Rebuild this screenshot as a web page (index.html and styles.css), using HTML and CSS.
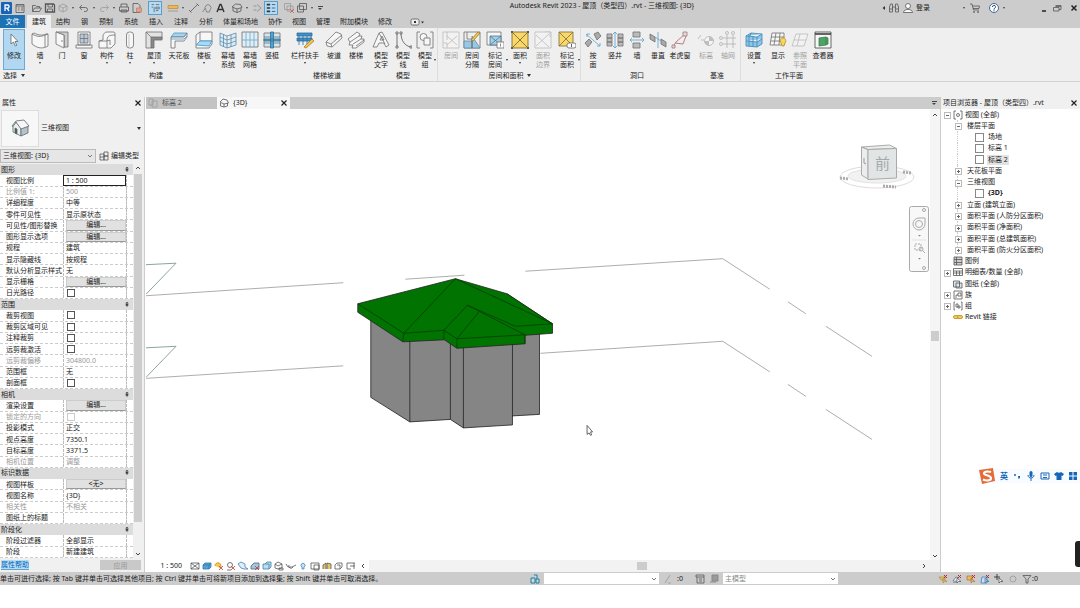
FILE: index.html
```html
<!DOCTYPE html>
<html lang="zh-CN">
<head>
<meta charset="utf-8">
<title>Autodesk Revit 2023</title>
<link rel="stylesheet" href="styles.css">
</head>
<body>
<header class="titlebar">
  <div class="quick">
    <button class="q" aria-label="Revit"><svg viewBox="0 0 12 12"><rect width="11" height="12" rx="1" fill="#1763b6"/><path d="M4 9V3h2.500a1.500 1.500 0 0 1 0 3.200H4M6 6.200L8 9" fill="none" stroke="#fff" stroke-width="1.300"/></svg></button>
    <button class="q" aria-label="主页"><svg viewBox="0 0 12 12" class="ln"><path d="M2 2.500h8v8H2zM2 4h8M4 6h1.500M7 6h2M4 8h1.500M7 8h2"/></svg></button>
    <button class="q gap" aria-label="打开"><svg viewBox="0 0 12 12" class="ln"><path d="M1.500 9.500v-6h3l1 1h3v1.500M1.500 9.500l2-3.500h7l-2 3.500z"/></svg></button>
    <button class="q" aria-label="保存"><svg viewBox="0 0 12 12" class="ln"><path d="M1.500 2h8l1 1v7h-9z" stroke-width="1.300"/><path d="M4 2v3h4.500V2M3.500 10V7h5v3"/></svg></button>
    <button class="q" aria-label="同步"><svg viewBox="0 0 12 12" class="lg"><path d="M2 4l4-2 4 2v4l-4 2-4-2zM2 4l4 2 4-2M6 6v4"/></svg></button>
    <button class="dd" aria-label="同步选项"></button>
    <button class="q" aria-label="放弃"><svg viewBox="0 0 12 12" class="ln"><path d="M4 3L1.500 5.500 4 8M2 5.500h5.500a2 2 0 0 1 0 4H6"/></svg></button>
    <button class="dd tight" aria-label="放弃列表"></button>
    <button class="q tight" aria-label="重做"><svg viewBox="0 0 12 12" class="lg"><path d="M8 3l2.500 2.500L8 8M10 5.500H4.500a2 2 0 0 0 0 4H6"/></svg></button>
    <button class="dd tight" aria-label="重做列表"></button>
    <button class="q tight" aria-label="打印"><svg viewBox="0 0 12 12" class="ln"><path d="M3 5V2h6v3M1.500 5h9v4h-9zM3 8h6v2H3z"/></svg></button>
    <button class="q" aria-label="PDF"><svg viewBox="0 0 12 12" class="ln"><path d="M2 1.500h5l2 2v7H2z"/><path d="M5.500 6h5v4h-5z" fill="#e8a08c" stroke="#b86"/></svg></button>
    <button class="q on gap" aria-label="属性"><svg viewBox="0 0 14 14" class="ln"><path d="M3 3h3M8 3h4M3 6h2M6 6v6M8 6h4v2H8zM8 10h3"/></svg></button>
    <button class="q gap" aria-label="测量"><svg viewBox="0 0 12 12"><path d="M1 3.500h10v3H1z" fill="#f2b64c" stroke="#b98a3c" stroke-width=".7"/><path d="M1 9h10" stroke="#888" stroke-width=".7"/></svg></button>
    <button class="dd tight" aria-label="测量选项"></button>
    <button class="q" aria-label="尺寸标注"><svg viewBox="0 0 12 12" class="ln"><path d="M2 10l8-8M1 8l2.500 2.500M8.500 1.500L11 4"/></svg></button>
    <button class="q" aria-label="标记"><svg viewBox="0 0 12 12" class="ln"><path d="M1.500 10l3-4M5 8a3 3 0 1 1 4 0l-.5 2h-3z" stroke="#777"/></svg></button>
    <button class="q" aria-label="文字"><svg viewBox="0 0 12 12"><path d="M3 10L6 2.500h1L10 10M4.500 7.500h4" fill="none" stroke="#333" stroke-width="1.400"/></svg></button>
    <button class="q gap" aria-label="三维视图"><svg viewBox="0 0 12 12" class="ln"><path d="M1 5l3.500-3 5 .5L11 5.500 6 7zM2 5.500V9l4 1.500V7M6 10.500L10 9V6"/></svg></button>
    <button class="dd tight" aria-label="三维视图选项"></button>
    <button class="q tight" aria-label="剖面"><svg viewBox="0 0 12 12" class="ln"><path d="M6 2.500L10 6 6 9.500M2.500 4h3M2.500 8h3" stroke="#888"/></svg></button>
    <button class="q on" aria-label="细线"><svg viewBox="0 0 14 14"><path d="M2 3h4M2 7h4M2 11h4" stroke="#333" stroke-width="2"/><path d="M8 3h4M8 7h4M8 11h4" stroke="#357"/></svg></button>
    <button class="q gap" aria-label="关闭非活动视图"><svg viewBox="0 0 12 12" class="ln"><path d="M1.500 1.500h6v6h-6zM4 4h6v5H4z" stroke="#999"/><path d="M7 7l4 4m0-4l-4 4" stroke="#c55"/></svg></button>
    <button class="q" aria-label="切换窗口"><svg viewBox="0 0 12 12" class="ln"><path d="M3.500 1.500h7v6h-7zM1.500 4h6v6h-6z"/></svg></button>
    <button class="dd tight" aria-label="窗口列表"></button>
    <button class="dd tight line" aria-label="自定义快速访问工具栏"></button>
  </div>
  <h1>Autodesk Revit 2023 - 屋顶（类型四）.rvt - 三维视图: {3D}</h1>
  <div class="account">
    <button class="q narrow" aria-label="收起"><svg viewBox="0 0 6 12"><path d="M4 4v4L1.500 6z" fill="#333"/></svg></button>
    <button class="q" aria-label="搜索"><svg viewBox="0 0 12 12" class="ln"><path d="M1.500 10V5l1-3h2v8zM10.500 10V5l-1-3h-2v8zM4.500 5h3M1.500 7h3M7.500 7h3"/></svg></button>
    <button class="signin"><svg viewBox="0 0 12 12" class="ln"><circle cx="6" cy="4" r="2.500" fill="#fff"/><path d="M1.500 10.500c0-4 9-4 9 0z" fill="#fff"/></svg>登录</button>
    <span class="space"></span>
    <button class="dd" aria-label="账户"></button>
    <button class="q" aria-label="商店"><svg viewBox="0 0 12 12" class="ln"><path d="M1 2h2l1.500 6H10M3.300 4h7.200L10 6.500H4"/><circle cx="5" cy="10" r=".6"/><circle cx="9" cy="10" r=".6"/></svg></button>
    <button class="q help" aria-label="帮助"><svg viewBox="0 0 12 12"><circle cx="6" cy="6" r="4.500" fill="#fff" stroke="#446a96"/><path d="M4.500 5a1.500 1.500 0 1 1 2 1.300L6 7v.7M6 8.300v1" fill="none" stroke="#246"/></svg></button>
    <button class="dd tight" aria-label="帮助菜单"></button>
    <span class="space"></span>
    <button class="q" aria-label="最小化"><svg viewBox="0 0 12 12"><path d="M4 9h4" stroke="#222" stroke-width="1.500"/></svg></button>
    <button class="q" aria-label="还原"><svg viewBox="0 0 12 12" class="ln"><path d="M4.500 3.500H10v4H8M2.500 5.500H8v3.500H2.500zM4.500 4.500H10"/></svg></button>
    <button class="q gap" aria-label="关闭"><svg viewBox="0 0 12 12"><path d="M3.500 3.500l5 5m0-5l-5 5" stroke="#222" stroke-width="1.500"/></svg></button>
  </div>
</header>

<nav class="tabs">
  <button class="file">文件</button>
  <button class="current">建筑</button>
  <div class="tabset"><button>结构</button><button>钢</button><button>预制</button><button>系统</button><button>插入</button><button>注释</button><button>分析</button></div>
  <div class="tabset close"><button>体量和场地</button><button>协作</button><button>视图</button><button>管理</button><button>附加模块</button><button>修改</button></div>
  <button class="state" aria-label="功能区状态"><svg viewBox="0 0 16 10" class="ln"><rect x="1" y="2" width="8" height="6" rx="1.500" fill="#eee"/><path d="M4 4h2v2H4z" fill="#333" stroke="none"/><path d="M11 4.500h3l-1.500 2z" fill="#333" stroke="none"/></svg></button>
</nav>

<section class="ribbon" aria-label="建筑">
  <div class="group pick">
    <div class="tools">
      <button class="tool w22 active"><svg viewBox="0 0 18 18"><path d="M6 3v10l2.500-2 1.800 4 1.500-.7L10 10.500h3z" fill="#fff" stroke="#666" stroke-width=".8"/></svg>修改</button>
    </div>
    <h2>选择 <i class="caret"></i></h2>
  </div>
  <div class="group build">
    <div class="tools">
      <button class="tool w22 menu"><svg viewBox="0 0 18 18" class="ic"><path d="M1 3c5 3 9 3 13 1l3-1v12c-5 3-10 2-13 0l-3-2z"/><path d="M1 3l2-1c4 2 8 3 12 1l2 0M14 4v12" fill="none"/></svg>墙</button>
      <button class="tool w22"><svg viewBox="0 0 18 18" class="ic"><path d="M3 1h12v15h-4V4L3 1z" fill="#ccc"/><path d="M3 1l8 3v13l-8-4z"/><path d="M9 9v2"/></svg>门</button>
      <button class="tool w22"><svg viewBox="0 0 18 18" class="ic"><path d="M3 1h12v13H3zM1 14h16v3H1z"/><path d="M5 3h8v9H5zM9 3v9M5 7.500h8" fill="#b8cadb"/></svg>窗</button>
      <button class="tool w24 menu"><svg viewBox="0 0 18 18" class="ic"><path d="M1 10l4-1V5c0-2 2-4 4-4h6c2 0 2 1 2 2v10l-4 4H1z"/><path d="M1 10h8v7M9 10c0-5 2-6 8-6M9 10l3-1v5" fill="none"/></svg>构件</button>
      <button class="tool w22 menu"><svg viewBox="0 0 18 18" class="ic"><rect x="5.500" y="1" width="7" height="16" rx="3"/><path d="M8 3v13" stroke="#bbb"/></svg>柱</button>
      <button class="tool w26 menu"><svg viewBox="0 0 18 18" class="ic"><path d="M1 1h16v7h-8l-3 9H1z" fill="#e2e2e2"/><path d="M1 1l5 5h11v3H9v8H6V6" fill="#888"/></svg>屋顶</button>
      <button class="tool w24"><svg viewBox="0 0 18 18" class="ic"><path d="M1 6l3-4h13l-3 4z" fill="#a8d3ec" stroke="#4b9bcb"/><path d="M1 6h13l3-4v4l-3 4H5v7H1z"/><path d="M1 8h13l3-3" fill="none" stroke="#4b9bcb"/></svg>天花板</button>
      <button class="tool w26 menu"><svg viewBox="0 0 18 18" class="ic"><path d="M1 13V4l4-3h12v12l-3 4H1z"/><path d="M5 1v9M5 10h12" fill="none"/><path d="M1 14l4-4h12l-3 5z" fill="#a5daf5" stroke="#3d98cc"/></svg>楼板</button>
      <button class="tool w22"><svg viewBox="0 0 18 18" class="ic bl"><path d="M1 2l7 3 9-3v12l-9 3-7-3zM8 5v12M1 6l7 3 9-3M1 10l7 3 9-3M4.500 3.500v12M12 4v12"/></svg>幕墙<br>系统</button>
      <button class="tool w22"><svg viewBox="0 0 18 18" class="ic"><path d="M1 1h16v15H1z" fill="#e2edf4"/><path d="M9 1v15M1 9h16M5 1v15M13 1v15" stroke="#6ba9cc"/></svg>幕墙<br>网格</button>
      <button class="tool w22"><svg viewBox="0 0 18 18" class="ic"><path d="M1 2h16v14H1zM1 6h16M1 12h16" fill="#d3e6f1"/><path d="M7.500 1h3v16h-3zM1 8h16v2H1z" fill="#4fa4d7" stroke="#356d8d"/></svg>竖梃</button>
    </div>
    <h2>构建</h2>
  </div>
  <div class="group stairs">
    <div class="tools">
      <button class="tool w36 menu"><svg viewBox="0 0 18 18"><path d="M1 2h15v3H1zM1 7h15v3H1zM3 5v9M7 5v9M11 5v9M15 5v7" fill="#3f8fca" stroke="#2c6c9f" stroke-width=".8"/><path d="M8 16l8-8 2 2-8 7z" fill="#f5c451" stroke="#a98025" stroke-width=".8"/></svg>栏杆扶手</button>
      <button class="tool w22"><svg viewBox="0 0 18 18" class="ic"><path d="M1 11L11 1l5 2 1 4L7 16l-5-1zM1 11l5 2L17 4M6 13l1 3"/></svg>坡道</button>
      <button class="tool w22"><svg viewBox="0 0 18 18" class="ic"><path d="M1 8l9-7 3 2-1 2 3 0-1 3 3 0v3l-8 6H5l1-3-4 0 1-3z"/><path d="M3 11l9-6M6 13l8-5M9 15l8-6"/></svg>楼梯</button>
    </div>
    <h2>楼梯坡道</h2>
  </div>
  <div class="group model ruled">
    <div class="tools">
      <button class="tool w22"><svg viewBox="0 0 18 18" class="ic"><path d="M1 16L7 2l3-1 7 13-3 2-2-4H7l-2 4zM8 9h4l-2-4z"/><path d="M7 2l6 11" fill="none"/></svg>模型<br>文字</button>
      <button class="tool w22"><svg viewBox="0 0 18 18" class="ln"><path d="M3 2v14M7 2c0 8 4 13 10 14"/><path d="M2 1h2v2H2zM2 15h2v2H2zM6 1h2v2H6zM16 15h2v2h-2z" fill="#fff"/></svg>模型<br>线</button>
      <button class="tool w22 side"><svg viewBox="0 0 18 18" class="ic"><path d="M4 1H1v16h3M14 1h3v16h-3" fill="none"/><circle cx="7.500" cy="6" r="3.500"/><path d="M8 7h6v7H8z"/></svg>模型<br>组</button>
    </div>
    <h2>模型</h2>
  </div>
  <div class="group rooms ruled">
    <div class="tools">
      <button class="tool w22 off" disabled><svg viewBox="0 0 18 18" class="ic"><path d="M1 1h16v16H1z"/><path d="M5 5l10 9M15 5L5 14M5 1v8M1 12h4v5"/></svg>房间</button>
      <button class="tool w20"><svg viewBox="0 0 18 18" class="ic"><path d="M1 1h16v16H1z" fill="#eee"/><path d="M1 10h8v7H1zM9 5l8 12H9z" fill="#9cc7e3" stroke="#5c8aa8"/><path d="M4 1v7h5v9" fill="none"/><path d="M8 9l7-8 2 1-7 8z" fill="#f4c94e" stroke="#9b7a25"/></svg>房间<br>分隔</button>
      <button class="tool w26 side"><svg viewBox="0 0 18 18" class="ic"><path d="M1 1h14v13H1z"/><path d="M4 5h11v9H4zM4 5l11 9M15 5L4 14" fill="#a9cfe6" stroke="#487691"/><path d="M11 11h7v6h-7z" fill="#fff"/><path d="M14.500 12.500v3"/></svg>标记<br>房间</button>
      <button class="tool w24 menu"><svg viewBox="0 0 18 18"><path d="M1 1h16v16H1zM1 1l16 16M17 1L1 17" fill="#f9d768" stroke="#6b5d35" stroke-width=".8"/><path d="M0 0h2v2H0zM16 0h2v2h-2zM0 16h2v2H0zM16 16h2v2h-2z" fill="#6d5b29"/></svg>面积</button>
      <button class="tool w22 off" disabled><svg viewBox="0 0 18 18" class="ic"><path d="M1 1h16v16H1z"/><path d="M2 15L15 3M2 4l13 12M11 1l5 0v5"/></svg>面积<br>边界</button>
      <button class="tool w26 side"><svg viewBox="0 0 18 18"><path d="M1 1h14v14H1zM1 1l14 14M15 1L1 15" fill="#f9d768" stroke="#7b6b3d" stroke-width=".8"/><rect x="9" y="12" width="9" height="5" rx="2" fill="#fff" stroke="#666" stroke-width=".8"/><path d="M13.500 13v3" stroke="#666"/></svg>标记<br>面积</button>
    </div>
    <h2>房间和面积 <i class="caret"></i></h2>
  </div>
  <div class="group holes">
    <div class="tools">
      <button class="tool w22"><svg viewBox="0 0 18 18" class="ic"><path d="M1 12l4-4 3 3-4 5zM10 3l4-2 3 4-4 4z" fill="#aaa"/><path d="M2 3l14 12M3 6V3h3M13 15h3v-3" stroke="#5ba3cc" fill="none"/></svg>按<br>面</button>
      <button class="tool w22"><svg viewBox="0 0 18 18" class="ic"><path d="M1 3h5v4H1zM1 7h5v4H1zM1 11h5v4H1zM12 3h5v4h-5zM12 7h5v4h-5zM12 11h5v4h-5z" fill="#bbb"/><path d="M9 1v16M7 3l2-2 2 2M7 15l2 2 2-2" stroke="#5ba3cc" fill="none"/></svg>竖井</button>
      <button class="tool w22"><svg viewBox="0 0 18 18" class="ic"><path d="M5 1h7v5H5zM5 12h7v5H5z" fill="#bbb"/><path d="M2 9h14M4 7L2 9l2 2M14 7l2 2-2 2" stroke="#5ba3cc" fill="none"/></svg>墙</button>
      <button class="tool w20"><svg viewBox="0 0 18 18" class="ic"><path d="M1 3l5 3v5l-5-3zM12 8l5 3v5l-5-3z" fill="#aaa"/><path d="M9 1v16M6 6l6 4" stroke="#5ba3cc" fill="none"/></svg>垂直</button>
      <button class="tool w24"><svg viewBox="0 0 18 18"><path d="M2 16l3-5 9-8M4 12l8 1 3-8" fill="none" stroke="#b88080"/><path d="M12 1h4v4h-4zM1 14h3v3H1z" fill="#ddd" stroke="#a57373" stroke-width=".8"/></svg>老虎窗</button>
    </div>
    <h2>洞口</h2>
  </div>
  <div class="group datum ruled">
    <div class="tools">
      <button class="tool w22 off" disabled><svg viewBox="0 0 18 18"><circle cx="12" cy="10" r="4.500" fill="#fff" stroke="#777"/><path d="M12 10V5.500A4.500 4.500 0 0 1 16.500 10zM12 10v4.500A4.500 4.500 0 0 1 7.500 10z" fill="#777"/><path d="M1 8l3-4M4 9h3" stroke="#777"/></svg>标高</button>
      <button class="tool w22 off" disabled><svg viewBox="0 0 18 18" class="ln"><path d="M8 4v13M14 4v13M4 7h13M4 13h13"/><circle cx="8" cy="2" r="1.500"/><circle cx="14" cy="2" r="1.500"/><circle cx="2" cy="7" r="1.500"/><circle cx="2" cy="13" r="1.500"/></svg>轴网</button>
    </div>
    <h2>基准</h2>
  </div>
  <div class="group plane">
    <div class="tools">
      <button class="tool w24 menu"><svg viewBox="0 0 18 18"><path d="M1 5l5-3 11 1v10l-5 3-11-1zM1 5l11 1 5-3M12 6v10M1 10l11 1 5-3M4 4v11M8 5v11M6 2l-1 3" fill="#8cc6e8" stroke="#3f86b4" stroke-width=".8"/></svg>设置</button>
      <button class="tool w24"><svg viewBox="0 0 18 18" class="ic"><path d="M3 2h12v12H1zM2 6h13M2 10h13M7 2L5 14M11 2l-1 12"/><path d="M11 9a3 3 0 1 1 5 3l-1 3h-2l-1-3z" fill="#f6d65b" stroke="#b59229"/></svg>显示</button>
      <button class="tool w20 off" disabled><svg viewBox="0 0 18 18" class="ic"><path d="M5 3h12l-4 12H1zM9 3L6 15M3 9h12"/></svg>参照<br>平面</button>
      <button class="tool w26"><svg viewBox="0 0 18 18" class="ic"><path d="M1 1h16v16H1z" stroke="#444"/><path d="M1 3h16" stroke="#333" stroke-width="1.500"/><path d="M5 7l7-1v8l-7 1zM12 6l2 1v6l-2 1" fill="#4da565" stroke="#3b7d4b"/></svg>查看器</button>
    </div>
    <h2>工作平面</h2>
  </div>
</section>

<main class="work">
  <aside class="props" aria-label="属性">
    <div class="panelhead"><h2>属性</h2><button class="x" aria-label="关闭属性"><svg viewBox="0 0 8 8"><path d="M1.500 1.500l5 5m0-5l-5 5" stroke="#222" stroke-width="1.200"/></svg></button></div>
    <button class="type"><span class="thumb"><svg viewBox="0 0 20 20" stroke="#5c6970" stroke-width=".8" stroke-linejoin="round"><path d="M3 8l3-4 5 6v8l-8-4z" fill="#eceff0"/><path d="M11 10l7-2v7l-7 3z" fill="#b7c2c8"/><path d="M2 8l4-5 8-1 5 6-8 3-5-7-3 4.500z" fill="#f7f7f7"/><path d="M5 10l2 1v5l-2-1z" fill="#555"/></svg></span><span class="typename">三维视图</span><i class="caret"></i></button>
    <div class="instance">
      <select aria-label="实例"><option>三维视图: {3D}</option></select>
      <button class="edit"><svg viewBox="0 0 10 10" class="ln"><path d="M1 3h4v6H1zM5 1h4v4H5zM5 5h4v4H5zM1 6h4"/></svg>编辑类型</button>
    </div>
    <div class="grid">
      <table>
        <tbody>
          <tr class="cat"><th colspan="3">图形<b>⇞</b></th></tr>
          <tr><th>视图比例</th><td class="focus"><input aria-label="视图比例" value="1 : 500"></td><td></td></tr>
          <tr class="dim"><th>比例值 1:</th><td>500</td><td></td></tr>
          <tr><th>详细程度</th><td>中等</td><td></td></tr>
          <tr><th>零件可见性</th><td>显示原状态</td><td></td></tr>
          <tr><th>可见性/图形替换</th><td><button>编辑...</button></td><td></td></tr>
          <tr><th>图形显示选项</th><td><button>编辑...</button></td><td></td></tr>
          <tr><th>规程</th><td>建筑</td><td></td></tr>
          <tr><th>显示隐藏线</th><td>按规程</td><td></td></tr>
          <tr><th>默认分析显示样式</th><td>无</td><td></td></tr>
          <tr><th>显示栅格</th><td><button>编辑...</button></td><td></td></tr>
          <tr><th><label for="sun">日光路径</label></th><td><input type="checkbox" id="sun"></td><td></td></tr>
          <tr class="cat"><th colspan="3">范围<b>⇞</b></th></tr>
          <tr><th><label for="crop">裁剪视图</label></th><td><input type="checkbox" id="crop"></td><td></td></tr>
          <tr><th><label for="region">裁剪区域可见</label></th><td><input type="checkbox" id="region"></td><td></td></tr>
          <tr><th><label for="anno">注释裁剪</label></th><td><input type="checkbox" id="anno"></td><td></td></tr>
          <tr><th><label for="far">远剪裁激活</label></th><td><input type="checkbox" id="far"></td><td></td></tr>
          <tr class="dim"><th>远剪裁偏移</th><td>304800.0</td><td></td></tr>
          <tr><th>范围框</th><td>无</td><td></td></tr>
          <tr><th><label for="section">剖面框</label></th><td><input type="checkbox" id="section"></td><td></td></tr>
          <tr class="cat"><th colspan="3">相机<b>⇞</b></th></tr>
          <tr><th>渲染设置</th><td><button>编辑...</button></td><td></td></tr>
          <tr class="dim"><th><label for="lock">锁定的方向</label></th><td><input type="checkbox" id="lock" disabled></td><td></td></tr>
          <tr><th>投影模式</th><td>正交</td><td></td></tr>
          <tr><th>视点高度</th><td>7350.1</td><td></td></tr>
          <tr><th>目标高度</th><td>3371.5</td><td></td></tr>
          <tr class="dim"><th>相机位置</th><td>调整</td><td></td></tr>
          <tr class="cat"><th colspan="3">标识数据<b>⇞</b></th></tr>
          <tr><th>视图样板</th><td><button>&lt;无&gt;</button></td><td></td></tr>
          <tr><th>视图名称</th><td>{3D}</td><td></td></tr>
          <tr class="dim"><th>相关性</th><td>不相关</td><td></td></tr>
          <tr><th>图纸上的标题</th><td></td><td></td></tr>
          <tr class="cat"><th colspan="3">阶段化<b>⇞</b></th></tr>
          <tr><th>阶段过滤器</th><td>全部显示</td><td></td></tr>
          <tr><th>阶段</th><td>新建建筑</td><td></td></tr>
        </tbody>
      </table>
      <div class="vbar"><svg viewBox="0 0 8 8"><path d="M2 5l2-2 2 2" class="chev"/></svg><span class="bar"></span><svg class="last" viewBox="0 0 8 8"><path d="M2 3l2 2 2-2" class="chev"/></svg></div>
    </div>
    <div class="propfoot"><a href="#help">属性帮助</a><button disabled>应用</button></div>
  </aside>

  <section class="view">
    <div class="doctabs">
      <button class="doc"><svg viewBox="0 0 10 10" class="lg"><path d="M1 1h4v6H1zM4 3h5v6H4z"/></svg>标高 2</button>
      <button class="doc current"><svg viewBox="0 0 10 10" class="ln"><path d="M1 4l3-3 4 1 1.500 3L5 6zM1.500 5v3L5 9V6M5 9l3.500-1V5"/></svg>{3D}<svg class="end" viewBox="0 0 8 8"><path d="M1.500 1.500l5 5m0-5l-5 5" stroke="#222" stroke-width="1.200"/></svg></button>
      <button class="dd line" aria-label="选项卡列表"></button>
    </div>
    <div class="stage">
      <div class="canvas">
        <svg class="scene" viewBox="146 109 783 451" preserveAspectRatio="xMinYMin slice" role="img" aria-label="三维模型">
          <g fill="none" stroke="#999" stroke-width=".8">
            <path d="M146 295.500L343 282.500M405 279L464 275M525 271L722 258.500L769 289M787 301.500L805 313.500M825 326L871 356"/>
            <path d="M146 378L343 365.500M540 353L722 341L769 371.500M787 384L805 396M825 409L871 439"/>
            <path d="M146 264.500L176 263L146 294M146 347.500L176 346L146 377" stroke="#6e9086"/>
          </g>
          <g stroke="#222" stroke-width=".8" stroke-linejoin="round">
            <path d="M370.500 318v79l39 24.500 40.500-2.500 13 8.500 49-3v-9l27-1.500v-84l-80-20z" fill="#858585"/>
            <path d="M409.500 338v83.500M450 338v81M463 343v84.500M512 343v73" fill="none"/>
            <path d="M357.500 303.500L455 278.500l51.500 15L552 323.500v9.500l-27.500 2v8.500l-68 4.500-12.500-8.500-41.500 2-45-29.500z" fill="#007300"/>
            <path d="M357.500 303.500l46 29.500 40-3 13 8.500 68-4v9M403.500 333l-1 8.500M443.500 330v9M456.500 338.500v9M455 278.500L403.500 333M455 278.500l97 45-36.500 2.500M506.500 293.500l45.500 30M443.500 330l23.500-25 57.500 29.500M479 311l-22.500 27.500M467 305l48 21" fill="none" stroke="#053d05"/>
          </g>
          <path d="M586.500 425v9l2-1.500 1.500 2.500 1-.5-1-3h2z" fill="#fff" stroke="#444" stroke-width=".8"/>
        </svg>
        <svg class="cube" viewBox="836 140 80 50">
          <ellipse cx="878" cy="177" rx="37" ry="11" fill="none" stroke="#ddd" stroke-width="1"/>
          <ellipse cx="878" cy="176" rx="29" ry="7" fill="#f2f2f2" stroke="#e2e2e2"/>
          <path d="M841 178l9 1M884 186l13 1M904 172l8 1" stroke="#aaa" stroke-width="3" stroke-dasharray="2 1"/>
          <path d="M862.500 147l28-2 7 3.500-28.500 1zM862.500 147v28l6.500 4v-29.500z" fill="#eceeee" stroke="#aaa"/>
          <path d="M869 149.500l28.500-1V178l-28.500 1.500z" fill="#e2e5e5" stroke="#aaa"/>
          <path d="M865 158v5l2 1" stroke="#999" fill="none"/>
          <text x="876" y="169" font-size="15" fill="#a4a9a9">前</text>
        </svg>
        <div class="navbar">
          <svg viewBox="0 0 20 66" fill="none" stroke="#aaa"><rect x=".5" y=".5" width="19" height="65" rx="2" fill="#f8f8f8"/><circle cx="15" cy="4" r="1.500"/><path d="M4 18a6 6 0 0 1 6-6h6v6a6 6 0 1 1-12 0z"/><circle cx="10" cy="18" r="3.500"/><path d="M9 29h3l-1.500 1.500zM9 52h3l-1.500 1.500z" fill="#888" stroke="none"/><path d="M3 34h14" stroke="#e2e2e2"/><path d="M6 38h6v6H6z" stroke-dasharray="2 1"/><circle cx="12" cy="43" r="2"/><path d="M13.500 44.500L16 47"/><circle cx="15" cy="62" r="1.500"/></svg>
        </div>
      </div>
      <div class="vbar"><svg viewBox="0 0 8 8"><path d="M2 5l2-2 2 2" class="chev"/></svg><span class="bar"></span><svg class="last" viewBox="0 0 8 8"><path d="M2 3l2 2 2-2" class="chev"/></svg></div>
    </div>
    <div class="viewbar">
      <button class="scale">1 : 500</button>
      <div class="viewicons">
        <svg viewBox="0 0 12 12" class="ln"><path d="M2 3h8v6H2zM2 3l8 6M10 3L2 9"/></svg>
        <svg viewBox="0 0 12 12" stroke-width=".8"><path d="M2 5l2-2h6v4L8 9H2zM2 5h6v4M8 5l2-2" fill="#57a3d8" stroke="#2c78a8"/></svg>
        <svg viewBox="0 0 12 12" stroke-width=".8"><path d="M2 6a3 3 0 1 1 5 2" fill="#f6c84c" stroke="#c28a1c"/><path d="M6 6l4 4m0-4l-4 4" stroke="#c33"/></svg>
        <svg viewBox="0 0 12 12" class="ln"><circle cx="5" cy="5" r="2.500"/><path d="M2 10h4"/><path d="M6 6l4 4m0-4l-4 4" stroke="#c33"/></svg>
        <svg viewBox="0 0 12 12" stroke-width=".8"><path d="M1 4l3-2 4 2v3l3 2H7L4 8z" fill="#def" stroke="#4783a8"/></svg>
        <svg viewBox="0 0 12 12" stroke-width=".8"><path d="M2 6l3-3h5v6H2z" fill="#9bc9e6" stroke="#567"/><path d="M6 6l4 4m0-4l-4 4" stroke="#c33"/></svg>
        <svg viewBox="0 0 12 12" stroke-width=".8"><path d="M2 4h6v5H2zM4 4l2-2h4v5l-2 2" fill="#bde" stroke="#3b82ab"/></svg>
        <svg viewBox="0 0 12 12" class="ln"><path d="M2 4l3-2 4 2v4L5 9 2 8zM2 4l3 2 4-2M6 8h4v2H6z"/></svg>
        <svg viewBox="0 0 12 12" class="ln"><path d="M1 4l2 3h4l4-2M4 5a2 2 0 0 0 4 2"/></svg>
        <svg viewBox="0 0 12 12" stroke-width=".8"><path d="M5 9V7a2 2 0 1 1 2 0v2z" fill="#cdf" stroke="#48a"/></svg>
        <svg viewBox="0 0 12 12" class="ln"><path d="M2 3h8v6H2zM5 5h5v5H5z"/></svg>
        <svg viewBox="0 0 12 12" class="ln"><path d="M2 9V5l3-2v6M6 9V3l4 1v5" fill="#e5c866"/></svg>
        <svg viewBox="0 0 12 12" class="ln"><path d="M2 5l2-2h5v4L7 9H2zM4 5h3v4"/></svg>
        <svg viewBox="0 0 12 12" class="ln"><path d="M2 9V3h8M5 6h5M2 9h4M9 3v6"/></svg>
        <svg viewBox="0 0 12 12"><path d="M7 4L5 6l2 2" class="chev"/></svg>
      </div>
      <div class="hbar"><span class="bar"></span><svg viewBox="0 0 8 8"><path d="M3 2l2 2-2 2" class="chev"/></svg></div>
    </div>
  </section>

  <aside class="browser" aria-label="项目浏览器">
    <div class="panelhead"><h2>项目浏览器 - 屋顶（类型四）.rvt</h2><button class="x" aria-label="关闭项目浏览器"><svg viewBox="0 0 8 8"><path d="M1.500 1.500l5 5m0-5l-5 5" stroke="#222" stroke-width="1.200"/></svg></button></div>
    <ul class="tree">
      <li class="l0 minus"><svg viewBox="0 0 10 10" class="ln"><path d="M3 1H1v8h2M7 1h2v8H7"/><circle cx="5" cy="5" r="1.500"/></svg>视图 (全部)</li>
      <li class="l1 minus">楼层平面</li>
      <li class="l2"><i class="sheet"></i>场地</li>
      <li class="l2"><i class="sheet"></i>标高 1</li>
      <li class="l2"><i class="sheet"></i><span class="sel">标高 2</span></li>
      <li class="l1 plus">天花板平面</li>
      <li class="l1 minus">三维视图</li>
      <li class="l2"><i class="sheet"></i><strong>{3D}</strong></li>
      <li class="l1 plus">立面 (建筑立面)</li>
      <li class="l1 plus">面积平面 (人防分区面积)</li>
      <li class="l1 plus">面积平面 (净面积)</li>
      <li class="l1 plus">面积平面 (总建筑面积)</li>
      <li class="l1 plus">面积平面 (防火分区面积)</li>
      <li class="l0"><svg viewBox="0 0 10 10" class="ln"><path d="M1 1h8v8H1zM1 3.500h8M1 6.500h8M3.500 1v8" fill="#ccc"/></svg>图例</li>
      <li class="l0 plus"><svg viewBox="0 0 10 10" class="ln"><path d="M.5 1.500h9v7h-9zM.5 4h9M.5 6h9M3.500 4v4.500M6.500 4v4.500"/></svg>明细表/数量 (全部)</li>
      <li class="l0"><svg viewBox="0 0 10 10" class="ln"><path d="M.5 2h6v6h-6zM3 4h6v5H3z" fill="#dce7ee"/></svg>图纸 (全部)</li>
      <li class="l0 plus"><svg viewBox="0 0 10 10" class="ln"><path d="M1 1h8v8H1zM3 8V5h2M5 3h3v3H5z"/></svg>族</li>
      <li class="l0 plus"><svg viewBox="0 0 10 10" class="ln"><path d="M2 1H1v8h1M8 1h1v8H8M3 3h2v3H3zM5 5h2v2H5z"/></svg>组</li>
      <li class="l0"><svg viewBox="0 0 10 10"><rect x=".5" y="3.500" width="5" height="3" rx="1.500" fill="#f4cd55" stroke="#c59a30"/><rect x="4.500" y="3.500" width="5" height="3" rx="1.500" fill="#f4cd55" stroke="#c59a30"/></svg>Revit 链接</li>
    </ul>
  </aside>
</main>

<footer class="status">
  <p>单击可进行选择; 按 Tab 键并单击可选择其他项目; 按 Ctrl 键并单击可将新项目添加到选择集; 按 Shift 键并单击可取消选择。</p>
  <div class="worksets">
    <svg viewBox="0 0 10 10"><path d="M1 4h4v5H1zM4 1h3v4M6 5h3v4H6z" fill="#bde" stroke="#287a94"/></svg>
    <select aria-label="工作集"><option></option></select>
    <svg viewBox="0 0 10 10" class="lg"><path d="M2 9L7 1M5 9h3"/></svg>
    <span class="count">:0</span>
    <svg viewBox="0 0 10 10" class="ln"><path d="M1 1h8v2H1zM2 3v6h7V3M4 5h3M4 7h3"/></svg>
    <svg viewBox="0 0 10 10"><path d="M3 1h6v6H3zM1 8h6" fill="#999" stroke="#888"/></svg>
    <select aria-label="设计选项" class="muted"><option>主模型</option></select>
  </div>
  <div class="filters">
    <svg viewBox="0 0 10 10"><path d="M1 3h6v3H3zM5 4v5l1.500-1.500H9z" fill="#f1bd4a" stroke="#a78c4d" stroke-width=".7"/><path d="M6 1l3 3m0-3L6 4" stroke="#c22"/></svg>
    <svg viewBox="0 0 10 10"><path d="M1 7l3-4 3 1M1 8h4M5 4v5l1.500-1.500H9z" fill="#fff" stroke="#456" stroke-width=".7"/><path d="M6 1l3 3m0-3L6 4" stroke="#c22"/></svg>
    <svg viewBox="0 0 10 10"><path d="M1 2h5v4H1zM5 4v5l1.500-1.500H9z" fill="#f1bd4a" stroke="#a7714d" stroke-width=".7"/><path d="M6 1l3 3m0-3L6 4" stroke="#c22"/></svg>
    <svg viewBox="0 0 10 10"><path d="M2 3h5v6H1zM5 4v5l1.500-1.500H9z" fill="#cdf" stroke="#2878ab" stroke-width=".7"/><path d="M6 1l3 3m0-3L6 4" stroke="#c22"/></svg>
    <svg viewBox="0 0 10 10" class="ln"><path d="M3 0v6M0 3h6" stroke="#222"/><path d="M5 4v5l1.500-1.500H9z" fill="#fff"/></svg>
    <svg viewBox="0 0 10 10" class="lg"><circle cx="5" cy="5" r="3"/></svg>
    <svg viewBox="0 0 10 10" class="ln"><path d="M1 1.500h8L6 5v4H4V5z"/></svg>
    <span class="count">:0</span>
  </div>
</footer>

<div class="ime" aria-label="输入法">
  <svg class="logo" viewBox="0 0 18 18"><path d="M1 3l14-2 2 13-13 3z" fill="#e66b35"/><path d="M13 5c-3-1-7-.5-7 1.500S13 8 13 11s-5 3-8 1.500" fill="none" stroke="#fff" stroke-width="2.200"/></svg>
  <span>英</span>
  <svg viewBox="0 0 10 10"><circle cx="3" cy="4" r="1"/><path d="M6 5h2v2L6.500 8z"/></svg>
  <svg viewBox="0 0 10 10"><rect x="3.500" y="0" width="3" height="6" rx="1.500"/><path d="M2 4c0 4 6 4 6 0M5 7v3" fill="none" stroke="#1667b5"/></svg>
  <svg viewBox="0 0 10 10"><path d="M1 2h8v6H1zM3 4h4M3 6.500h4" fill="none" stroke="#1667b5"/></svg>
  <svg viewBox="0 0 10 10"><path d="M3 1c1 1 3 1 4 0l3 2-1.500 2L7.500 4.500V9h-5V4.500L1.500 5 0 3z"/></svg>
  <svg viewBox="0 0 10 10"><path d="M1 1h3.500v3.500H1zM5.500 1H9v3.500H5.500zM1 5.500h3.500V9H1zM5.500 5.500H9V9H5.500z"/></svg>
</div>
<div class="handle"></div>
</body>
</html>
```
FILE: styles.css
```css
* { box-sizing: border-box; }
body {
  margin: 0;
  height: 100vh;
  padding-bottom: 23px;
  display: flex;
  flex-direction: column;
  overflow: hidden;
  background: #fff;
  color: #222;
  font: 7px/10px "Noto Sans", "Noto Sans CJK SC", sans-serif;
}
button, input, select { font: inherit; color: inherit; margin: 0; padding: 0; border: 0; background: none; border-radius: 0; }
h1, h2, p, ul { margin: 0; padding: 0; font-size: 7px; font-weight: 400; }
svg { display: block; flex: none; }
.ln { fill: none; stroke: #555; stroke-width: .8; }
.lg { fill: none; stroke: #999; stroke-width: .8; }
.ic { fill: #f7f7f7; stroke: #707070; stroke-width: .8; stroke-linejoin: round; }
.bl { fill: #d9ebf5; stroke: #5a8ba8; }
.chev { fill: none; stroke: #444; stroke-width: 1; }
.caret { display: inline-block; border: 2px solid transparent; border-top: 3px solid #333; border-bottom: 0; margin-left: 2px; vertical-align: 1px; }

/* title bar */
.titlebar { display: flex; align-items: center; height: 15px; background: #ccc; flex: none; }
.titlebar h1 { flex: 1; text-align: center; white-space: nowrap; padding-bottom: 4px; }
.quick, .account { display: flex; align-items: center; flex: none; }
.q { width: 12px; height: 12px; margin-left: 1px; }
.q svg { width: 12px; height: 12px; }
.q.gap { margin-left: 5px; }
.q.on { width: 14px; height: 14px; background: #b5daf3; border: 1px solid #5c9cc9; }
.q.tight, .dd.tight { margin-left: 0; }
.q.narrow, .q.narrow svg { width: 6px; }
.dd { width: 8px; height: 12px; display: flex; align-items: center; justify-content: center; flex-direction: column; }
.dd::after { content: ""; border: 1px solid transparent; border-top: 2px solid #444; border-bottom: 0; }
.dd.line::before { content: ""; width: 5px; height: 1px; background: #444; margin-bottom: 1px; }
.dd.line::after { border-width: 2px 2px 0; }
.account { width: 200px; }
.account .help { margin-left: 7px; }
.signin { display: flex; align-items: center; gap: 2px; margin-left: 2px; }
.signin svg { width: 12px; height: 12px; }
.space { flex: 1; }

/* ribbon tabs */
.tabs { display: flex; height: 13px; background: #ccc; flex: none; }
.tabs button { padding: 0 5px; white-space: nowrap; }
.tabs .file { background: #1c72b5; color: #fff; width: 25px; }
.tabs .current { background: #efefef; width: 24px; margin: 0 0 0 2px; }
.tabset { display: flex; gap: 1px; }
.tabset.close { gap: 0; }
.tabs .state { margin-left: 8px; }
.state svg { width: 16px; height: 10px; }

/* ribbon */
.ribbon { display: flex; height: 54px; background: #efefef; border-bottom: 1px solid #d2d2d2; flex: none; margin-bottom: 15px; box-shadow: 0 15px 0 #f0f0f0; }
.group { display: flex; flex-direction: column; }
.group h2 { text-align: center; line-height: 11px; white-space: nowrap; }
.tools { display: flex; height: 42px; padding-top: 1px; }
.pick { width: 29px; padding-left: 3px; }
.pick h2 { text-align: left; }
.stairs { padding: 0 2px 0 4px; }
.model { padding: 0 1px; }
.rooms { padding-left: 2px; }
.holes { padding-left: 1px; }
.datum { padding: 0 1px 0 3px; }
.plane { padding-left: 1px; }
.ruled { border-right: 1px solid #dcdcdc; }
.tool { display: flex; flex-direction: column; align-items: center; padding-top: 2px; line-height: 9px; white-space: nowrap; position: relative; }
.tool svg { width: 18px; height: 18px; margin-bottom: 2px; }
.tool.menu::after { content: ""; margin-top: 2px; border: 1px solid transparent; border-top: 2px solid #333; border-bottom: 0; }
.tool.side::after { content: ""; position: absolute; right: 0; bottom: 9px; border: 1px solid transparent; border-top: 2px solid #333; border-bottom: 0; }
.tool.active { background: #b2d8f1; border: 1px solid #6fa9d2; padding-top: 1px; }
.tool.off { opacity: .4; }
.w20 { width: 20px; }
.w22 { width: 22px; }
.w24 { width: 24px; }
.w26 { width: 26px; }
.w36 { width: 36px; }

/* panels */
.work { flex: 1; min-height: 0; display: grid; grid-template-columns: 145px 1fr 140px; }
.panelhead { display: flex; align-items: center; justify-content: space-between; height: 12px; padding: 0 2px; background: #f0f0f0; white-space: nowrap; flex: none; }
.x, .x svg { width: 8px; height: 8px; }
.props { display: flex; flex-direction: column; min-height: 0; background: #f0f0f0; border-right: 1px solid #ccc; }
.type { display: flex; align-items: center; height: 38px; gap: 2px; padding: 0 3px 0 1px; flex: none; text-align: left; }
.thumb { width: 38px; height: 37px; background: #f7f7f7; border: 1px solid #ddd; display: grid; place-items: center; }
.thumb svg { width: 20px; height: 20px; }
.typename { flex: 1; }
.instance { display: flex; height: 17px; padding: 2px 0 1px; flex: none; gap: 3px; }
select {
  appearance: none;
  background-color: #fff;
  background-image: linear-gradient(45deg, transparent 45%, #888 45%, #888 65%, transparent 65%), linear-gradient(-45deg, transparent 45%, #888 45%, #888 65%, transparent 65%);
  background-image: url("data:image/svg+xml,%3Csvg xmlns='http://www.w3.org/2000/svg' viewBox='0 0 8 8'%3E%3Cpath d='M2 3l2 2 2-2' fill='none' stroke='%23777'/%3E%3C/svg%3E");
  background-position: right 1px center;
  background-size: 8px 8px;
  background-repeat: no-repeat;
}
.instance select { width: 96px; border: 1px solid #bbb; background-color: #e6e6e6; padding-left: 2px; }
.edit { display: flex; align-items: center; gap: 2px; }
.edit svg { width: 10px; height: 10px; }
.grid { display: flex; flex: 1; min-height: 0; }
.grid table { display: flex; width: 133px; border-collapse: collapse; }
.grid tbody { display: flex; flex-direction: column; flex: 1; }
.grid tr { display: flex; flex: 1; min-height: 0; background: #fff; border-bottom: 1px dashed #ccc; }
.grid th, .grid td { display: flex; align-items: center; padding: 0; font-weight: 400; white-space: nowrap; line-height: 9px; min-height: 0; }
.grid th { width: 63px; padding-left: 6px; flex: none; }
.grid td { width: 63px; padding-left: 2px; border-left: 1px dashed #bbb; }
.grid td:last-child { width: 7px; }
.grid .cat { background: #dcdcdc; border-color: #dcdcdc; }
.grid .cat th { width: 100%; padding: 0 3px 0 1px; justify-content: space-between; }
.cat b { font-size: 7px; font-weight: 400; }
.dim { color: #999; }
.grid td.focus { border: 1px solid #222; }
.grid td input:not([type]) { width: 100%; height: 8px; }
.grid td button { flex: 1; align-self: stretch; background: #e1e1e1; border: 1px solid #ccc; border-bottom-color: #999; line-height: 8px; }
.grid input[type="checkbox"] { appearance: none; width: 8px; height: 8px; border: 1px solid #555; background: #fff; margin-left: 1px; }
.grid input:disabled { border-color: #ccc; }
.vbar { display: flex; flex-direction: column; align-items: center; background: #f0f0f0; width: 10px; }
.vbar svg, .hbar svg { width: 8px; height: 8px; }
.props .vbar .bar { width: 8px; height: 348px; margin-top: 2px; background: #cdcdcd; }
.vbar .last { margin-top: auto; }
.propfoot { display: flex; align-items: center; justify-content: space-between; height: 14px; padding: 1px 3px 1px 1px; flex: none; }
.propfoot a { background: #b9ddf6; color: #0067b5; text-decoration: none; border-bottom: 1px solid #5fa3d3; line-height: 9px; }
.propfoot button { width: 41px; height: 10px; line-height: 9px; background: #c9c9c9; color: #999; }

/* view */
.view { display: flex; flex-direction: column; min-width: 0; min-height: 0; padding-left: 1px; }
.doctabs { display: flex; height: 12px; background: #ccc; flex: none; }
.doc { display: flex; align-items: center; gap: 4px; width: 71px; padding: 0 2px; color: #555; background: #c3c3c3; }
.doc svg { width: 10px; height: 10px; }
.doc.current { width: 73px; background: #f7f7f7; color: #222; }
.doc svg.end { width: 8px; height: 8px; margin-left: auto; }
.doctabs .dd { margin-left: auto; margin-right: 2px; }
.stage { flex: 1; min-height: 0; display: flex; }
.canvas { flex: 1; position: relative; background: #fff; overflow: hidden; min-width: 0; }
.scene { width: 100%; height: 100%; }
.cube { position: absolute; right: 15px; top: 31px; width: 80px; height: 50px; }
.navbar { position: absolute; right: 1px; top: 97px; }
.navbar svg { width: 20px; height: 66px; }
.stage .vbar { background: #f5f5f5; padding-top: 2px; }
.stage .vbar .bar { width: 8px; height: 10px; background: #ccc; margin-top: 212px; }
.viewbar { display: flex; align-items: center; height: 12px; background: #fff; flex: none; }
.scale { width: 43px; text-align: right; padding-right: 7px; white-space: nowrap; }
.viewicons { display: flex; }
.viewicons svg { width: 12px; height: 12px; flex: 0 1 12px; }
.hbar { flex: 1; display: flex; align-items: center; height: 12px; background: #f2f2f2; padding-right: 12px; }
.hbar .bar { width: 10px; height: 8px; background: #ccc; margin-left: 48%; }
.hbar svg { margin-left: auto; }

/* project browser */
.browser { background: #fff; border-left: 1px solid #ccc; min-width: 0; }
.tree { list-style: none; display: grid; grid-auto-rows: 1fr; min-height: 214px; line-height: 10px; }
.tree li { display: flex; align-items: center; white-space: nowrap; gap: 2px; position: relative; }
.tree svg { width: 10px; height: 10px; }
.l0 { padding-left: 12px; }
.l1 { padding-left: 26px; }
.l2 { padding-left: 34px; }
.l1::after, .l2::after { content: ""; position: absolute; left: 16px; top: 0; bottom: 0; border-left: 1px dotted #ccc; }
.minus::before, .plus::before {
  content: "";
  position: absolute;
  z-index: 1;
  left: 3px;
  top: 3px;
  width: 5px;
  height: 5px;
  border: 1px solid #bbb;
  background: linear-gradient(#666, #666) center / 3px 1px no-repeat #fff;
}
.plus::before { background: linear-gradient(#666, #666) center / 3px 1px no-repeat, linear-gradient(#666, #666) center / 1px 3px no-repeat #fff; }
.l1.minus::before, .l1.plus::before { left: 14px; }
.sheet { width: 9px; height: 9px; border: 1px solid #888; margin-right: 2px; }
.sel { background: #e2e2e2; padding: 0 1px; margin-left: -1px; }

/* status bar */
.status { display: flex; align-items: center; height: 13px; background: #ccc; flex: none; }
.status p { flex: 1; white-space: nowrap; }
.status svg { width: 10px; height: 10px; }
.worksets { display: flex; align-items: center; gap: 4px; width: 308px; margin-right: 100px; }
.status select { width: 115px; height: 11px; padding-left: 2px; flex: none; }
.worksets .count { width: 16px; }
.muted { color: #888; }
.filters { display: flex; align-items: center; gap: 4px; width: 142px; }
.filters .count { margin-left: -4px; }

/* overlays */
.ime { position: fixed; right: 0; top: 467px; display: flex; align-items: center; gap: 4px; height: 18px; color: #1667b5; font-weight: 700; font-size: 8px; background: linear-gradient(#f8fbff, #f8fbff) 0 center / 100% 14px no-repeat; padding-right: 2px; }
.ime svg { width: 10px; height: 10px; fill: #1667b5; }
.ime .logo { width: 18px; height: 18px; }
.handle { position: fixed; right: 0; top: 541px; width: 5px; height: 26px; background: #222; border-radius: 3px 0 0 3px; }
```
